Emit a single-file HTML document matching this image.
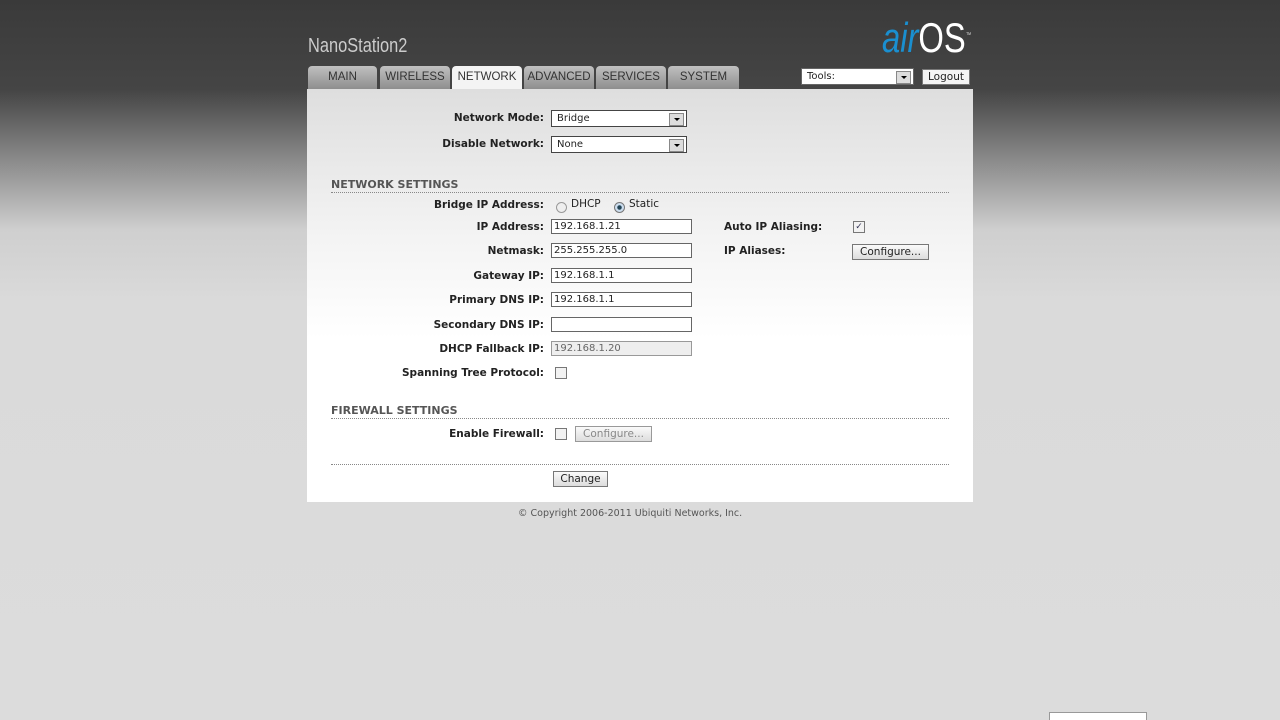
<!DOCTYPE html>
<html style="background:#dcdcdc"><head><style>
html,body{margin:0;width:1280px;height:720px;overflow:hidden}
body{background:linear-gradient(#3a3a3a 0px,#454545 90px,#8a8a8a 160px,#cfcfcf 230px,#dadada 300px,#dcdcdc 720px);font-family:"DejaVu Sans","Liberation Sans",sans-serif;font-size:10.5px;color:#222;position:relative}
.a{position:absolute}
.lbl{position:absolute;right:736px;font-weight:bold;font-size:10.5px;color:#222}
.inp{position:absolute;left:551px;width:137px;height:13px;border:1px solid #666;background:#fff;font-size:10px;line-height:13px;padding-left:2px}
.tab{position:absolute;top:66px;height:23px;background:linear-gradient(#c0c0c0,#8e8e8e);border-radius:4px 4px 0 0;color:#333;font-family:"Liberation Sans",sans-serif;font-size:11.5px;line-height:23px;text-align:center}
.sec{position:absolute;left:331px;width:618px;font-weight:bold;color:#555;font-size:11px;border-bottom:1px dotted #888;padding-bottom:1px}
.btn{position:absolute;border:1px solid #777;background:linear-gradient(#fafafa,#ddd);font-size:10.5px;text-align:center;line-height:14px}
.cb{position:absolute;width:10px;height:10px;border:1px solid #777;background:#f2f2f2}
.sel{position:absolute;left:551px;width:129px;height:15px;border:1px solid #444;background:#fff;font-size:10px;line-height:15px;padding-left:5px}
.sel::after{content:"";position:absolute;right:2px;top:2px;width:13px;height:11px;background:#ddd;border:1px solid #888}
.ar{position:absolute;right:6px;top:7px;border-left:3px solid transparent;border-right:3px solid transparent;border-top:3px solid #000;z-index:2}
</style></head><body>
<div class="a" style="left:308px;top:35px;color:#ccc;font-family:'Liberation Sans',sans-serif;font-size:20px;transform:scaleX(.82);transform-origin:left">NanoStation2</div>
<div class="a" style="left:882px;top:14px;font-family:'Liberation Sans',sans-serif;font-size:42px;line-height:44px;transform:scaleX(.78);transform-origin:left"><i style="color:#1a8fd0">air</i><span style="color:#fff">OS</span><sup style="font-size:7px;color:#ccc">™</sup></div>
<div class="tab" style="left:308px;width:69px">MAIN</div>
<div class="tab" style="left:380px;width:70px">WIRELESS</div>
<div class="tab" style="left:452px;width:70px;background:#f4f4f4;height:24px">NETWORK</div>
<div class="tab" style="left:524px;width:70px">ADVANCED</div>
<div class="tab" style="left:596px;width:70px">SERVICES</div>
<div class="tab" style="left:668px;width:71px">SYSTEM</div>
<div class="sel" style="left:801px;top:68px;width:106px;height:15px;line-height:15px;border-color:#666">Tools:<span class="ar"></span></div>
<div class="btn" style="left:922px;top:69px;width:46px;height:14px;background:#f4f4f4">Logout</div>
<div class="a" style="left:307px;top:89px;width:666px;height:413px;background:linear-gradient(#dedede,#f4f4f4 150px,#fff 250px)"></div>

<div class="lbl" style="top:112px">Network Mode:</div>
<div class="sel" style="top:110px">Bridge<span class="ar"></span></div>
<div class="lbl" style="top:138px">Disable Network:</div>
<div class="sel" style="top:136px">None<span class="ar"></span></div>

<div class="sec" style="top:178px">NETWORK SETTINGS</div>
<div class="lbl" style="top:199px">Bridge IP Address:</div>
<div class="a" style="left:556px;top:202px;width:9px;height:9px;border-radius:50%;border:1px solid #999;background:#eee"></div>
<div class="a" style="left:571px;top:198px">DHCP</div>
<div class="a" style="left:614px;top:202px;width:9px;height:9px;border-radius:50%;border:1px solid #777;background:radial-gradient(#245 30%,#cde 40%)"></div>
<div class="a" style="left:629px;top:198px">Static</div>

<div class="lbl" style="top:221px">IP Address:</div><div class="inp" style="top:219px">192.168.1.21</div>
<div class="a" style="left:724px;top:221px;font-weight:bold">Auto IP Aliasing:</div>
<div class="cb" style="left:853px;top:221px;font-size:9px;line-height:10px;text-align:center;color:#335">✓</div>
<div class="lbl" style="top:245px">Netmask:</div><div class="inp" style="top:243px">255.255.255.0</div>
<div class="a" style="left:724px;top:245px;font-weight:bold">IP Aliases:</div>
<div class="btn" style="left:852px;top:244px;width:75px">Configure...</div>
<div class="lbl" style="top:270px">Gateway IP:</div><div class="inp" style="top:268px">192.168.1.1</div>
<div class="lbl" style="top:294px">Primary DNS IP:</div><div class="inp" style="top:292px">192.168.1.1</div>
<div class="lbl" style="top:319px">Secondary DNS IP:</div><div class="inp" style="top:317px"></div>
<div class="lbl" style="top:343px">DHCP Fallback IP:</div><div class="inp" style="top:341px;background:#eee;color:#666;border-color:#999">192.168.1.20</div>
<div class="lbl" style="top:367px">Spanning Tree Protocol:</div><div class="cb" style="left:555px;top:367px"></div>

<div class="sec" style="top:404px">FIREWALL SETTINGS</div>
<div class="lbl" style="top:428px">Enable Firewall:</div><div class="cb" style="left:555px;top:428px"></div>
<div class="btn" style="left:575px;top:426px;width:75px;color:#888;border-color:#999">Configure...</div>
<div class="a" style="left:331px;top:464px;width:618px;border-top:1px dotted #888"></div>
<div class="btn" style="left:553px;top:471px;width:53px">Change</div>
<div class="a" style="left:518px;top:508px;font-size:9.5px;color:#555">© Copyright 2006-2011 Ubiquiti Networks, Inc.</div>
<div class="a" style="left:1049px;top:712px;width:96px;height:10px;border:1px solid #999;background:#fff"></div>
</body></html>
